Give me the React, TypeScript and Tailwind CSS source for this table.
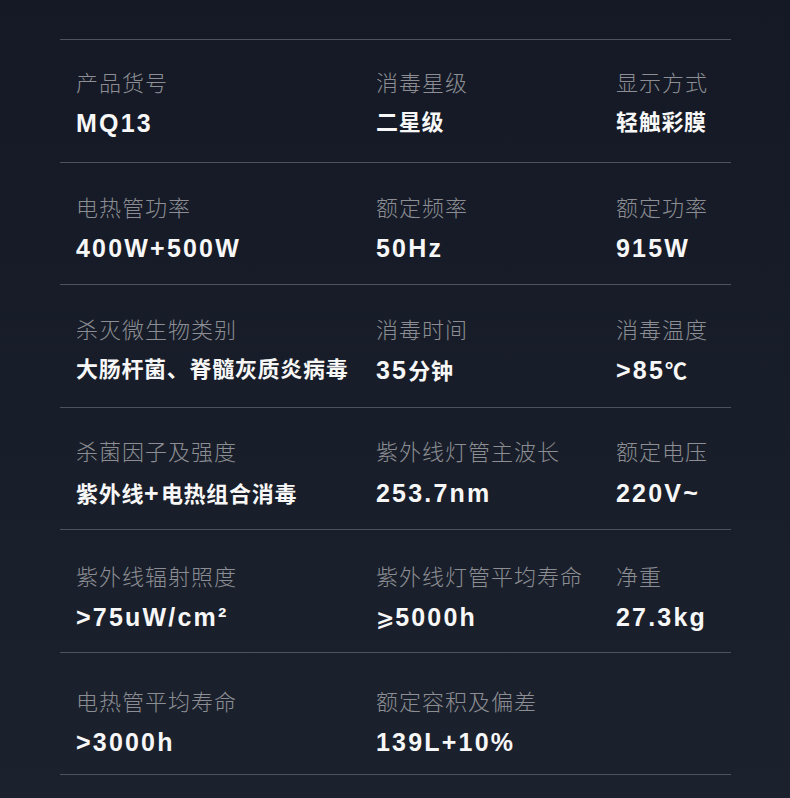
const rows = [
  {
    h: 'h-[123px]',
    pt: 'pt-[26px]',
    gap: 'gap-[12px]',
    items: [
      ['产品货号', 'MQ13'],
      ['消毒星级', '二星级'],
      ['显示方式', '轻触彩膜'],
    ],
  },
  {
    h: 'h-[122px]',
    pt: 'pt-[28px]',
    gap: 'gap-[12px]',
    items: [
      ['电热管功率', '400W+500W'],
      ['额定频率', '50Hz'],
      ['额定功率', '915W'],
    ],
  },
  {
    h: 'h-[123px]',
    pt: 'pt-[28px]',
    gap: 'gap-[12px]',
    items: [
      ['杀灭微生物类别', '大肠杆菌、脊髓灰质炎病毒'],
      ['消毒时间', '35分钟'],
      ['消毒温度', '>85℃'],
    ],
  },
  {
    h: 'h-[122px]',
    pt: 'pt-[27px]',
    gap: 'gap-[13px]',
    items: [
      ['杀菌因子及强度', '紫外线+电热组合消毒'],
      ['紫外线灯管主波长', '253.7nm'],
      ['额定电压', '220V~'],
    ],
  },
  {
    h: 'h-[123px]',
    pt: 'pt-[30px]',
    gap: 'gap-[12px]',
    items: [
      ['紫外线辐射照度', '>75uW/cm²'],
      ['紫外线灯管平均寿命', '⩾5000h'],
      ['净重', '27.3kg'],
    ],
  },
  {
    h: 'h-[122px]',
    pt: 'pt-[32px]',
    gap: 'gap-[12px]',
    items: [
      ['电热管平均寿命', '>3000h'],
      ['额定容积及偏差', '139L+10%'],
    ],
  },
];

// latin runs are set wider than the CJK ones, like in the source image
function Value({ text }: { text: string }) {
  const parts = text.match(/[\x20-\x7E²]+|[^\x20-\x7E²]+/g) ?? [];
  return (
    <div className="whitespace-nowrap text-[22px] leading-[30px] font-bold tracking-[0.7px] text-[#f7f7f7] [font-family:'Liberation_Sans','Noto_Sans_CJK_SC','DejaVu_Sans',sans-serif]">
      {parts.map((p, i) =>
        /[\x20-\x7E²]/.test(p[0]) ? (
          <span key={i} className="text-[25px] tracking-[2.2px]">
            {p}
          </span>
        ) : (
          <span key={i}>{p}</span>
        ),
      )}
    </div>
  );
}

export default function App() {
  return (
    <div className="h-[798px] w-full bg-gradient-to-b from-[#141925] to-[#1c222d] pt-[39px]">
      <div className="ml-[60px] w-[671px] border-t border-[#4d525b]">
        {rows.map((row, r) => (
          <div
            key={r}
            className={`${row.h} ${row.pt} grid grid-cols-[300px_240px_1fr] border-b border-[#4d525b] pl-4`}
          >
            {row.items.map(([label, value]) => (
              <div key={label} className={`flex flex-col ${row.gap}`}>
                <div className="whitespace-nowrap text-[22px] leading-[30px] font-light tracking-[1px] text-[#8c8e93] [font-family:'Noto_Sans_CJK_SC',sans-serif]">
                  {label}
                </div>
                <Value text={value} />
              </div>
            ))}
          </div>
        ))}
      </div>
    </div>
  );
}
